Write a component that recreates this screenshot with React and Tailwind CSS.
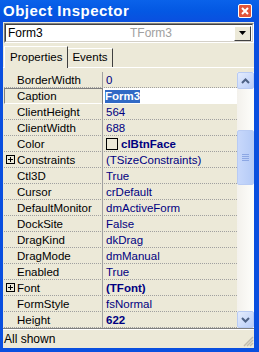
import React from "react";

const rows = [
  { name: "BorderWidth", value: "0" },
  { name: "Caption", value: "Form3", selected: true },
  { name: "ClientHeight", value: "564" },
  { name: "ClientWidth", value: "688" },
  { name: "Color", value: "clBtnFace", bold: true, swatch: true },
  { name: "Constraints", value: "(TSizeConstraints)", plus: true },
  { name: "Ctl3D", value: "True" },
  { name: "Cursor", value: "crDefault" },
  { name: "DefaultMonitor", value: "dmActiveForm" },
  { name: "DockSite", value: "False" },
  { name: "DragKind", value: "dkDrag" },
  { name: "DragMode", value: "dmManual" },
  { name: "Enabled", value: "True" },
  { name: "Font", value: "(TFont)", bold: true, plus: true },
  { name: "FormStyle", value: "fsNormal" },
  { name: "Height", value: "622", bold: true },
];

function PlusBox() {
  return (
    <span className="absolute left-[2px] top-[3px] w-[9px] h-[9px] border border-black bg-[#ece9d8] flex items-center justify-center">
      <svg width="7" height="7" viewBox="0 0 7 7">
        <path d="M1 3.5h5M3.5 1v5" stroke="black" strokeWidth="1" />
      </svg>
    </span>
  );
}

function Row({ row }) {
  if (row.selected) {
    return (
      <div className="flex h-[16px]">
        <div className="relative w-[98px] shrink-0 border-t border-l border-[#808080] border-b border-b-white pl-[12px] leading-[14px] text-black">
          {row.name}
        </div>
        <div className="w-[1px] bg-[#808080]" />
        <div className="flex-1 bg-white flex items-center pl-[2px]">
          <span className="bg-[#316ac5] text-white font-bold leading-[13px]">
            {row.value}
          </span>
        </div>
      </div>
    );
  }
  return (
    <div className="flex h-[16px] border-b border-dotted border-[#a0a0a0]">
      <div className="relative w-[98px] shrink-0 pl-[13px] leading-[16px] text-black">
        {row.plus && <PlusBox />}
        {row.name}
      </div>
      <div className="w-[1px] bg-[#a0a0a0]" />
      <div
        className={
          "flex-1 flex items-center pl-[3px] leading-[16px] text-[#000080] " +
          (row.bold ? "font-bold" : "")
        }
      >
        {row.swatch && (
          <span className="w-[12px] h-[12px] border border-black bg-[#ece9d8] mr-[3px] shrink-0" />
        )}
        {row.value}
      </div>
    </div>
  );
}

function ScrollButton({ down }) {
  return (
    <div className="h-[17px] w-[17px] rounded-[2px] border border-[#b8cbf4] bg-gradient-to-br from-[#e4ecfd] to-[#b9cdf7] flex items-center justify-center">
      <svg width="9" height="6" viewBox="0 0 9 6">
        <path
          d={down ? "M1 1l3.5 3.5L8 1" : "M1 5l3.5-3.5L8 5"}
          fill="none"
          stroke="#4d6185"
          strokeWidth="2"
        />
      </svg>
    </div>
  );
}

export default function App() {
  return (
    <div
      className="w-[259px] h-[352px] bg-[#0a4fdf] flex flex-col text-[11.5px]"
      style={{ fontFamily: '"Liberation Sans", Arial, sans-serif' }}
    >
      {/* title bar */}
      <div className="h-[22px] shrink-0 bg-gradient-to-b from-[#0a62ea] via-[#0458e3] to-[#0a4fdf] flex items-center justify-between pl-[3px] pr-[7px]">
        <span className="text-white font-bold text-[15px] tracking-[0.5px] leading-[22px]">
          Object Inspector
        </span>
        <span className="w-[14px] h-[14px] rounded-[2px] border border-white bg-[#e2553a] flex items-center justify-center">
          <svg width="8" height="8" viewBox="0 0 8 8">
            <path d="M1 1l6 6M7 1l-6 6" stroke="white" strokeWidth="2" />
          </svg>
        </span>
      </div>

      <div className="flex-1 ml-[3px] mr-[5px] mb-[5px] bg-[#ece9d8] flex flex-col">
        {/* combo */}
        <div className="mt-[1px] h-[20px] ml-[1px] border border-t-[#808080] border-l-[#808080] border-r-white border-b-white">
          <div className="h-full bg-white flex items-center border border-t-[#404040] border-l-[#404040] border-r-[#d4d0c8] border-b-[#d4d0c8]">
            <span className="pl-[2px] text-[12px] text-black w-[124px]">Form3</span>
            <span className="text-[12px] text-[#a0a0a0] flex-1">TForm3</span>
            <span className="w-[17px] h-[15px] mr-[1px] bg-[#ece9d8] border border-t-white border-l-white border-r-[#404040] border-b-[#404040] flex items-center justify-center">
              <svg width="7" height="4" viewBox="0 0 7 4">
                <path d="M0 0h7L3.5 4z" fill="black" />
              </svg>
            </span>
          </div>
        </div>

        {/* tabs */}
        <div className="mt-[3px] h-[22px] flex items-end pl-[1px] border-b border-white">
          <div className="relative h-[22px] -mb-[1px] px-[5px] bg-[#ece9d8] border-t border-l border-white border-r border-r-[#404040] flex items-center text-[11.5px] text-black z-10">
            Properties
          </div>
          <div className="h-[19px] px-[4px] border-t border-white border-r border-r-[#404040] flex items-center text-[11.5px] text-black">
            Events
          </div>
        </div>

        {/* grid */}
        <div className="flex-1 flex pt-[4px] border-b border-[#808080]">
          <div className="flex-1 flex flex-col pl-[1px]">
            {rows.map((r) => (
              <Row key={r.name} row={r} />
            ))}
          </div>
          <div className="w-[17px] flex flex-col bg-gradient-to-r from-[#f3f1ec] to-[#fefefb]">
            <ScrollButton />
            <div className="h-[41px]" />
            <div className="h-[55px] w-[17px] rounded-[2px] border border-[#b8cbf4] bg-gradient-to-r from-[#c8d8fb] to-[#b5cbf7] flex flex-col items-center justify-center gap-[1px]">
              <span className="w-[7px] h-[1px] bg-[#8ca7e4]" />
              <span className="w-[7px] h-[1px] bg-[#8ca7e4]" />
              <span className="w-[7px] h-[1px] bg-[#8ca7e4]" />
              <span className="w-[7px] h-[1px] bg-[#8ca7e4]" />
            </div>
            <div className="flex-1" />
            <ScrollButton down />
          </div>
        </div>

        {/* status */}
        <div className="h-[19px] shrink-0 border-t border-white flex items-center justify-between pl-[1px]">
          <span className="text-[12px] text-black">All shown</span>
          <svg width="11" height="11" viewBox="0 0 11 11" className="self-end mb-[1px]">
            <path d="M10 1L1 10M10 4L4 10M10 7L7 10" stroke="#c0bcae" strokeWidth="1.5" />
          </svg>
        </div>
      </div>
    </div>
  );
}
